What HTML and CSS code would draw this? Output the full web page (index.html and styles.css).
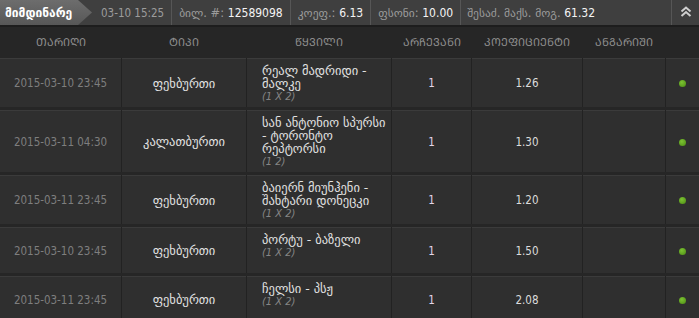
FILE: index.html
```html
<!DOCTYPE html>
<html lang="ka">
<head>
<meta charset="utf-8">
<title>მიმდინარე</title>
<link rel="stylesheet" href="styles.css">
</head>
<body>
<div class="bar">
  <div class="tab">მიმდინარე</div>
  <div class="seg seg-first"><span class="num">03-10 15:25</span></div>
  <div class="seg"><span class="lbl">ბილ. #:</span>&nbsp;<span class="val">12589098</span></div>
  <div class="seg"><span class="lbl">კოეფ.:</span>&nbsp;<span class="val">6.13</span></div>
  <div class="seg"><span class="lbl">ფსონი:</span>&nbsp;<span class="val">10.00</span></div>
  <div class="seg seg-grow"><span class="lbl">შესაძ. მაქს. მოგ.</span>&nbsp;<span class="val">61.32</span></div>
  <div class="toggle">
    <svg width="12" height="11" viewBox="0 0 12 11"><polyline points="1.5,5.5 6,1.5 10.5,5.5" fill="none" stroke="#cfcfcf" stroke-width="2"/><polyline points="1.5,10 6,6 10.5,10" fill="none" stroke="#cfcfcf" stroke-width="2"/></svg>
  </div>
</div>
<div class="table">
  <div class="head">
    <div class="hc">ᲗᲐᲠᲘᲦᲘ</div>
    <div class="hc">ᲢᲘᲞᲘ</div>
    <div class="hc">ᲬᲧᲕᲘᲚᲘ</div>
    <div class="hc">ᲐᲠᲩᲔᲕᲐᲜᲘ</div>
    <div class="hc">ᲙᲝᲔᲤᲘᲪᲘᲔᲜᲢᲘ</div>
    <div class="hc">ᲐᲜᲒᲐᲠᲘᲨᲘ</div>
    <div class="hc"></div>
  </div>
  <div class="rows">
    <div class="row">
      <div class="c date">2015-03-10 23:45</div>
      <div class="c sport">ფეხბურთი</div>
      <div class="c pair"><div>რეალ მადრიდი - მალკე</div><div class="pick">(1 X 2)</div></div>
      <div class="c choice">1</div>
      <div class="c coef">1.26</div>
      <div class="c"></div>
      <div class="c"><span class="dot"></span></div>
    </div>
    <div class="row">
      <div class="c date">2015-03-11 04:30</div>
      <div class="c sport">კალათბურთი</div>
      <div class="c pair"><div>სან ანტონიო სპურსი - ტორონტო რეპტორსი</div><div class="pick">(1 2)</div></div>
      <div class="c choice">1</div>
      <div class="c coef">1.30</div>
      <div class="c"></div>
      <div class="c"><span class="dot"></span></div>
    </div>
    <div class="row">
      <div class="c date">2015-03-11 23:45</div>
      <div class="c sport">ფეხბურთი</div>
      <div class="c pair"><div>ბაიერნ მიუნჰენი - შახტარი დონეცკი</div><div class="pick">(1 X 2)</div></div>
      <div class="c choice">1</div>
      <div class="c coef">1.20</div>
      <div class="c"></div>
      <div class="c"><span class="dot"></span></div>
    </div>
    <div class="row">
      <div class="c date">2015-03-10 23:45</div>
      <div class="c sport">ფეხბურთი</div>
      <div class="c pair"><div>პორტუ - ბაზელი</div><div class="pick">(1 X 2)</div></div>
      <div class="c choice">1</div>
      <div class="c coef">1.50</div>
      <div class="c"></div>
      <div class="c"><span class="dot"></span></div>
    </div>
    <div class="row">
      <div class="c date">2015-03-11 23:45</div>
      <div class="c sport">ფეხბურთი</div>
      <div class="c pair"><div>ჩელსი - პსჟ</div><div class="pick">(1 X 2)</div></div>
      <div class="c choice">1</div>
      <div class="c coef">2.08</div>
      <div class="c"></div>
      <div class="c"><span class="dot"></span></div>
    </div>
  </div>
</div>
</body>
</html>
```
FILE: styles.css
```css
html, body {
  margin: 0;
  padding: 0;
  background: #262626;
  font-family: "DejaVu Sans", sans-serif;
  font-size: 12.5px;
  color: #dddddd;
}

.num,
.val,
.date,
.choice,
.coef,
.pick {
  font-family: "DejaVu Sans Condensed", "DejaVu Sans", sans-serif;
  font-size: 11.5px;
}

.bar {
  display: flex;
  height: 25px;
  background: #3f3f3f;
  border-bottom: 2px solid #1d1d1d;
  align-items: stretch;
  white-space: nowrap;
  font-size: 11.5px;
}

.tab {
  width: 92px;
  flex: none;
  box-sizing: border-box;
  padding-left: 5px;
  display: flex;
  align-items: center;
  font-weight: bold;
  font-size: 12px;
  color: #ffffff;
  background: linear-gradient(#6d6d6d, #575757);
  clip-path: polygon(0 0, 78px 0, 100% 50%, 78px 100%, 0 100%);
}

.seg {
  display: flex;
  align-items: center;
  padding: 0 7px;
  border-left: 1px solid #565656;
}

.seg-first {
  border-left: none;
  padding-left: 9px;
}

.seg-grow {
  flex: 1;
  padding-left: 6px;
}

.num {
  color: #9c9c9c;
}

.lbl {
  color: #9c9c9c;
}

.val {
  color: #f4f4f4;
  font-size: 12px;
}

.toggle {
  width: 26px;
  flex: none;
  border-left: 1px solid #565656;
  display: flex;
  align-items: center;
  justify-content: center;
  padding-left: 1px;
  padding-bottom: 2px;
}

.head,
.row {
  display: grid;
  grid-template-columns: 121px 124px 144px 79px 110px 82px 1fr;
  column-gap: 1px;
}

.head {
  height: 28px;
  align-items: center;
  color: #8e8e8e;
  font-size: 11px;
}

.hc {
  text-align: center;
}

.rows {
  display: flex;
  flex-direction: column;
  gap: 3px;
  padding-top: 3px;
}

.row {
  background: #222222;
}

.c {
  background: #2f2f2f;
  border-top: 1px solid #3b3b3b;
  min-height: 46px;
  box-sizing: border-box;
  display: flex;
  align-items: center;
  justify-content: center;
}

.date {
  color: #7e7e7e;
}

.sport {
  color: #e2e2e2;
}

.pair {
  display: block;
  padding: 5px 2px 4px 15px;
  line-height: 13px;
  color: #e2e2e2;
}

.pick {
  font-style: italic;
  font-size: 11px;
  color: #858585;
}

.choice {
  color: #e2d6ea;
}

.coef {
  color: #dcdcdc;
}

.dot {
  width: 7px;
  height: 7px;
  border-radius: 50%;
  background: radial-gradient(circle at 40% 35%, #7cc232, #4c8c14);
  margin-top: 1px;
}
```
